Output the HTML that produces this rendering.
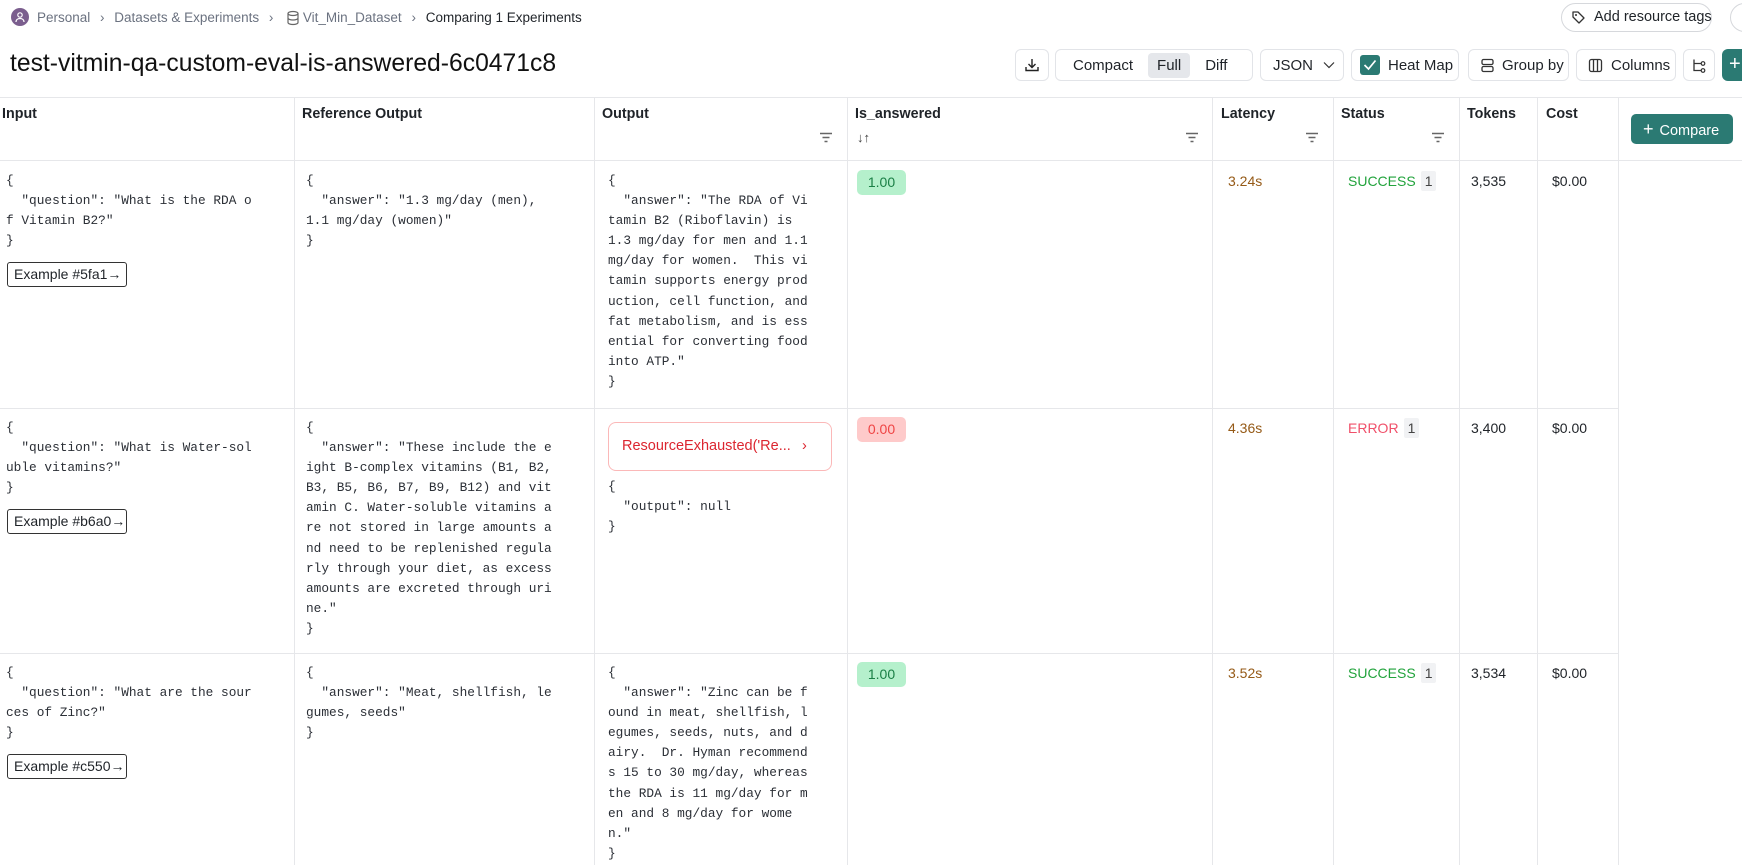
<!DOCTYPE html>
<html><head><meta charset="utf-8"><style>
*{box-sizing:border-box;margin:0;padding:0}
body{width:1742px;height:865px;overflow:hidden;background:#fff;font-family:"Liberation Sans",sans-serif;color:#1f2328;position:relative}
.a{position:absolute}
.bc{top:8px;font-size:13.5px;color:#6b7280;line-height:20px;white-space:nowrap}
.btn{position:absolute;top:49px;height:32px;border:1px solid #e2e4e8;border-radius:6px;background:#fff;font-size:15px;color:#1f2328;display:flex;align-items:center;white-space:nowrap}
.vl{position:absolute;top:97px;bottom:0;width:1px;background:#e6e7ea}
.hl{position:absolute;height:1px;background:#e6e7ea}
.hd{position:absolute;top:106px;font-size:14.3px;font-weight:bold;color:#1f2328}
.flt{position:absolute;top:132px}
.mono{position:absolute;font-family:"Liberation Mono",monospace;font-size:12.8px;line-height:20.1px;white-space:pre;color:#2b2f36}
.ex{position:absolute;left:7px;width:120px;height:25px;border:1px solid #333;border-radius:3px;font-size:14px;line-height:23px;padding-left:6px;color:#1f2328;white-space:nowrap}
.badge{position:absolute;left:857px;width:49px;height:25px;border-radius:5px;font-size:14px;line-height:25px;text-align:center}
.sm{position:absolute;font-size:14px;line-height:20px;white-space:nowrap}
.one{display:inline-block;background:#f1f2f4;color:#444;padding:0 4px;margin-left:5px;border-radius:2px}
</style></head><body>
<div class="a" style="left:11px;top:8px;width:18px;height:18px;border-radius:50%;background:#7b5e8e"></div>
<svg class="a" style="left:14px;top:11px" width="12" height="12" viewBox="0 0 12 12"><circle cx="6" cy="4" r="2.2" fill="none" stroke="#fff" stroke-width="1.2"/><path d="M2 11c0-2.5 2-3.5 4-3.5s4 1 4 3.5" fill="none" stroke="#fff" stroke-width="1.2"/></svg>
<div class="a bc" style="left:37px">Personal <span style="margin:0 6px">›</span> Datasets &amp; Experiments <span style="margin:0 6px">›</span> <span style="display:inline-block;width:16px"></span> Vit_Min_Dataset <span style="margin:0 6px">›</span> <span style="color:#1f2328">Comparing 1 Experiments</span></div>
<svg class="a" style="left:286px;top:10px" width="14" height="16" viewBox="0 0 14 16"><ellipse cx="7" cy="3.5" rx="5" ry="2" fill="none" stroke="#666" stroke-width="1.2"/><path d="M2 3.5v9c0 1.1 2.2 2 5 2s5-.9 5-2v-9M2 8c0 1.1 2.2 2 5 2s5-.9 5-2" fill="none" stroke="#666" stroke-width="1.2"/></svg>
<div class="a" style="left:1561px;top:3px;width:151px;height:29px;border:1px solid #d6d8dc;border-radius:15px;font-size:14.5px;line-height:27px;padding-left:32px;white-space:nowrap">Add resource tags</div>
<svg class="a" style="left:1571px;top:10px" width="15" height="15" viewBox="0 0 15 15"><path d="M2 2h5l6 6-5 5-6-6z" fill="none" stroke="#333" stroke-width="1.3" stroke-linejoin="round"/><circle cx="5" cy="5" r="1" fill="#333"/></svg>
<div class="a" style="left:1730px;top:3px;width:29px;height:29px;border:1px solid #d6d8dc;border-radius:50%"></div>
<div class="a" style="left:10px;top:49px;font-size:24.7px;line-height:30px;color:#111;white-space:nowrap">test-vitmin-qa-custom-eval-is-answered-6c0471c8</div>
<div class="btn" style="left:1015px;width:34px;justify-content:center"><svg width="16" height="16" viewBox="0 0 16 16"><path d="M8 2v8M4.5 7l3.5 3.5L11.5 7M2 10v3.5h12V10" fill="none" stroke="#222" stroke-width="1.4"/></svg></div>
<div class="btn" style="left:1055px;width:198px"><span style="margin-left:17px">Compact</span><span style="margin-left:15px;background:#e5e7eb;border-radius:4px;padding:4px 9px">Full</span><span style="margin-left:15px">Diff</span></div>
<div class="btn" style="left:1260px;width:84px;padding-left:12px">JSON <svg style="margin-left:10px" width="12" height="8" viewBox="0 0 12 8"><path d="M1 1.5l5 5 5-5" fill="none" stroke="#333" stroke-width="1.2"/></svg></div>
<div class="btn" style="left:1351px;width:108px;padding-left:8px"><span style="width:20px;height:20px;background:#2b7a73;border-radius:3px;display:inline-flex;align-items:center;justify-content:center"><svg width="14" height="12" viewBox="0 0 14 12"><path d="M1.5 6l4 4 7-8.5" fill="none" stroke="#fff" stroke-width="1.7"/></svg></span><span style="margin-left:8px">Heat Map</span></div>
<div class="btn" style="left:1468px;width:101px;padding-left:11px"><svg width="15" height="15" viewBox="0 0 15 15"><rect x="2" y="1.5" width="11" height="5" rx="1.5" fill="none" stroke="#333" stroke-width="1.3"/><rect x="2" y="8.5" width="11" height="5" rx="1.5" fill="none" stroke="#333" stroke-width="1.3"/></svg><span style="margin-left:7px">Group by</span></div>
<div class="btn" style="left:1576px;width:100px;padding-left:11px"><svg width="15" height="15" viewBox="0 0 15 15"><rect x="1.5" y="1.5" width="12" height="12" rx="2" fill="none" stroke="#333" stroke-width="1.3"/><path d="M5.5 1.5v12M9.5 1.5v12" stroke="#333" stroke-width="1.3"/></svg><span style="margin-left:8px">Columns</span></div>
<div class="btn" style="left:1683px;width:32px;justify-content:center"><svg width="15" height="15" viewBox="0 0 15 15"><path d="M2 1.5v11h7M2 5.5h7" fill="none" stroke="#333" stroke-width="1.3"/><circle cx="11" cy="5.5" r="1.8" fill="none" stroke="#333" stroke-width="1.2"/><circle cx="11" cy="12.5" r="1.8" fill="none" stroke="#333" stroke-width="1.2"/></svg></div>
<div class="a" style="left:1722px;top:49px;width:30px;height:32px;background:#2b7a73;border-radius:6px;color:#fff;font-size:20px;line-height:30px;padding-left:7px">+</div>
<div class="hl" style="left:0;right:0;top:97px"></div>
<div class="hl" style="left:0;right:0;top:160px"></div>
<div class="hl" style="left:0;width:1618px;top:408px"></div>
<div class="hl" style="left:0;width:1618px;top:653px"></div>
<div class="vl" style="left:294px"></div><div class="vl" style="left:594px"></div><div class="vl" style="left:847px"></div><div class="vl" style="left:1212px"></div><div class="vl" style="left:1333px"></div><div class="vl" style="left:1459px"></div><div class="vl" style="left:1537px"></div><div class="vl" style="left:1618px"></div>
<div class="hd" style="left:2px">Input</div>
<div class="hd" style="left:302px">Reference Output</div>
<div class="hd" style="left:602px">Output</div>
<div class="hd" style="left:855px">Is_answered</div>
<div class="hd" style="left:1221px">Latency</div>
<div class="hd" style="left:1341px">Status</div>
<div class="hd" style="left:1467px">Tokens</div>
<div class="hd" style="left:1546px">Cost</div>
<div class="a" style="left:857px;top:130px;font-size:13px;color:#444">↓↑</div>
<svg class="flt" style="left:819px" width="14" height="11" viewBox="0 0 14 11"><path d="M1 1.5h12M3.5 5.5h7M5.5 9.5h3" stroke="#666" stroke-width="1.4"/></svg>
<svg class="flt" style="left:1185px" width="14" height="11" viewBox="0 0 14 11"><path d="M1 1.5h12M3.5 5.5h7M5.5 9.5h3" stroke="#666" stroke-width="1.4"/></svg>
<svg class="flt" style="left:1305px" width="14" height="11" viewBox="0 0 14 11"><path d="M1 1.5h12M3.5 5.5h7M5.5 9.5h3" stroke="#666" stroke-width="1.4"/></svg>
<svg class="flt" style="left:1431px" width="14" height="11" viewBox="0 0 14 11"><path d="M1 1.5h12M3.5 5.5h7M5.5 9.5h3" stroke="#666" stroke-width="1.4"/></svg>
<div class="a" style="left:1631px;top:114px;width:102px;height:30px;background:#2b7a73;border-radius:5px;color:#fff;font-size:14.5px;line-height:30px;padding-left:12px;white-space:nowrap"><span style="font-size:18px;margin-right:6px">+</span>Compare</div>
<div class="mono" style="left:6px;top:171px">{
  "question": "What is the RDA o
f Vitamin B2?"
}</div>
<div class="ex" style="top:262px">Example #5fa1→</div>
<div class="mono" style="left:306px;top:171px">{
  "answer": "1.3 mg/day (men),
1.1 mg/day (women)"
}</div>
<div class="mono" style="left:608px;top:171px">{
  "answer": "The RDA of Vi
tamin B2 (Riboflavin) is
1.3 mg/day for men and 1.1
mg/day for women.  This vi
tamin supports energy prod
uction, cell function, and
fat metabolism, and is ess
ential for converting food
into ATP."
}</div>
<div class="badge" style="top:170px;background:#b5f0cc;color:#1a7f45">1.00</div>
<div class="sm" style="left:1228px;top:171px;color:#955a17">3.24s</div>
<div class="sm" style="left:1348px;top:171px;color:#22a33c">SUCCESS<span class="one">1</span></div>
<div class="sm" style="left:1471px;top:171px">3,535</div>
<div class="sm" style="left:1552px;top:171px">$0.00</div>
<div class="mono" style="left:6px;top:418px">{
  "question": "What is Water-sol
uble vitamins?"
}</div>
<div class="ex" style="top:509px">Example #b6a0→</div>
<div class="mono" style="left:306px;top:418px">{
  "answer": "These include the e
ight B-complex vitamins (B1, B2,
B3, B5, B6, B7, B9, B12) and vit
amin C. Water-soluble vitamins a
re not stored in large amounts a
nd need to be replenished regula
rly through your diet, as excess
amounts are excreted through uri
ne."
}</div>
<div class="a" style="left:608px;top:422px;width:224px;height:49px;border:1px solid #fbb8b8;border-radius:8px;color:#dc2630;font-size:14.5px;line-height:47px;padding-left:13px;white-space:nowrap">ResourceExhausted('Re...<span style="position:absolute;left:193px">›</span></div>
<div class="mono" style="left:608px;top:477px">{
  "output": null
}</div>
<div class="badge" style="top:417px;background:#fecaca;color:#ef4444">0.00</div>
<div class="sm" style="left:1228px;top:418px;color:#955a17">4.36s</div>
<div class="sm" style="left:1348px;top:418px;color:#f0506a">ERROR<span class="one">1</span></div>
<div class="sm" style="left:1471px;top:418px">3,400</div>
<div class="sm" style="left:1552px;top:418px">$0.00</div>
<div class="mono" style="left:6px;top:663px">{
  "question": "What are the sour
ces of Zinc?"
}</div>
<div class="ex" style="top:754px">Example #c550→</div>
<div class="mono" style="left:306px;top:663px">{
  "answer": "Meat, shellfish, le
gumes, seeds"
}</div>
<div class="mono" style="left:608px;top:663px">{
  "answer": "Zinc can be f
ound in meat, shellfish, l
egumes, seeds, nuts, and d
airy.  Dr. Hyman recommend
s 15 to 30 mg/day, whereas
the RDA is 11 mg/day for m
en and 8 mg/day for wome
n."
}</div>
<div class="badge" style="top:662px;background:#b5f0cc;color:#1a7f45">1.00</div>
<div class="sm" style="left:1228px;top:663px;color:#955a17">3.52s</div>
<div class="sm" style="left:1348px;top:663px;color:#22a33c">SUCCESS<span class="one">1</span></div>
<div class="sm" style="left:1471px;top:663px">3,534</div>
<div class="sm" style="left:1552px;top:663px">$0.00</div>
</body></html>
